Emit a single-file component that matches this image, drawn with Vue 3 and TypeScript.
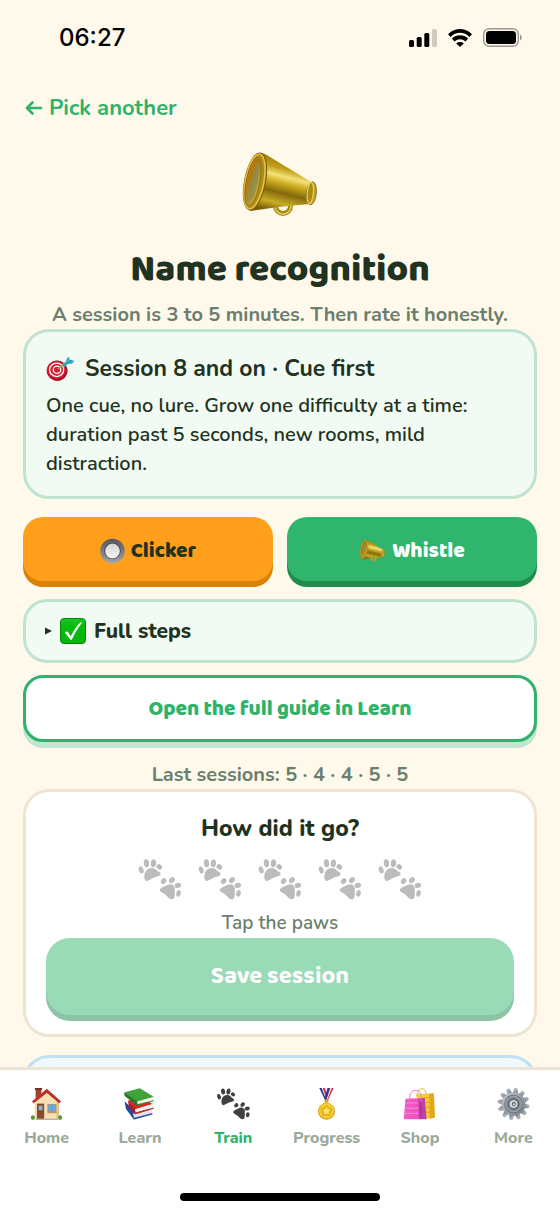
<script setup lang="ts">
import { ref } from 'vue'

interface Tab {
  label: string
  icon: string
}

const tabs: Tab[] = [
  { label: 'Home', icon: 'house' },
  { label: 'Learn', icon: 'books' },
  { label: 'Train', icon: 'paws' },
  { label: 'Progress', icon: 'medal' },
  { label: 'Shop', icon: 'bags' },
  { label: 'More', icon: 'gear' },
]

const activeTab = ref<string>('Train')
const rating = ref<number>(0)
const lastSessions: number[] = [5, 4, 4, 5, 5]
const teeth: number[] = Array.from({ length: 12 }, (_, i) => i * 30)
</script>

<template>
  <div class="app">
    <svg class="sprite" aria-hidden="true">
      <defs>
        <linearGradient id="brass" x1="0.62" y1="0.1" x2="0.38" y2="1">
          <stop offset="0" stop-color="#a07c0c" />
          <stop offset="0.2" stop-color="#c39f16" />
          <stop offset="0.34" stop-color="#f3e27a" />
          <stop offset="0.46" stop-color="#cdae22" />
          <stop offset="0.64" stop-color="#86690a" />
          <stop offset="0.84" stop-color="#c9ad27" />
          <stop offset="1" stop-color="#7a5d09" />
        </linearGradient>
        <linearGradient id="bell" x1="0" y1="0" x2="1" y2="0.6">
          <stop offset="0" stop-color="#c9861a" />
          <stop offset="0.35" stop-color="#b5780f" />
          <stop offset="0.7" stop-color="#9c9142" />
          <stop offset="1" stop-color="#c9ac34" />
        </linearGradient>
        <linearGradient id="steel" x1="0" y1="0" x2="1" y2="1">
          <stop offset="0" stop-color="#c3c8ce" />
          <stop offset="1" stop-color="#737b85" />
        </linearGradient>
        <linearGradient id="ring" x1="0" y1="0" x2="0" y2="1">
          <stop offset="0" stop-color="#55565b" />
          <stop offset="1" stop-color="#a5a6aa" />
        </linearGradient>
        <linearGradient id="knob" x1="0" y1="0" x2="0" y2="1">
          <stop offset="0" stop-color="#d2d2d4" />
          <stop offset="1" stop-color="#f7f7f8" />
        </linearGradient>
        <linearGradient id="tick" x1="0" y1="0" x2="0" y2="1">
          <stop offset="0" stop-color="#22c52c" />
          <stop offset="0.3" stop-color="#04bd0a" />
          <stop offset="1" stop-color="#06b50a" />
        </linearGradient>
        <linearGradient id="pink" x1="0" y1="0" x2="1" y2="0">
          <stop offset="0" stop-color="#f05bc4" />
          <stop offset="0.66" stop-color="#ee4fc0" />
          <stop offset="0.7" stop-color="#b83aa0" />
          <stop offset="1" stop-color="#c545ab" />
        </linearGradient>
      </defs>

      <symbol id="megaphone" viewBox="0 0 80 72">
        <circle cx="43" cy="56" r="7.500" fill="none" stroke="#a58a1c" stroke-width="5" />
        <circle cx="43" cy="56" r="8" fill="none" stroke="#e6cf5c" stroke-width="1.500" />
        <path d="M22 3 Q26 4 30 7 L72 32.500 L70 54 L38 57 L10 61 Z" fill="url(#brass)" />
        <ellipse cx="71.500" cy="43.300" rx="4.800" ry="11.500" transform="rotate(6 71.500 43.300)" fill="#c4a520" stroke="#7c610a" stroke-width="0.800" />
        <ellipse cx="70.300" cy="43" rx="3" ry="10.500" transform="rotate(6 70.300 43)" fill="#a88a16" stroke="#e5cd58" stroke-width="1.200" />
        <ellipse cx="15" cy="31.500" rx="10.500" ry="29" transform="rotate(11 15 31.500)" fill="#b08b13" stroke="#7b5e09" stroke-width="1" />
        <ellipse cx="14.500" cy="31.500" rx="9.300" ry="27.700" transform="rotate(11 14.500 31.500)" fill="none" stroke="#e0c046" stroke-width="1.600" />
        <ellipse cx="13" cy="31.800" rx="6.800" ry="24.500" transform="rotate(11 13 31.800)" fill="url(#bell)" stroke="#8f6c0c" stroke-width="0.800" />
        <path d="M9 44 C10 31 13 20 17 14 C20 25 17 42 11 51 Z" fill="#8d8c4c" opacity="0.600" />
      </symbol>

      <symbol id="target" viewBox="0 0 30 26">
        <ellipse cx="11.500" cy="14.800" rx="10.800" ry="10.600" transform="rotate(20 11.500 14.800)" fill="#a90f22" />
        <ellipse cx="10.800" cy="13.800" rx="9.700" ry="9.300" fill="#d41f33" />
        <ellipse cx="11" cy="13.800" rx="7.300" ry="7" fill="none" stroke="#fff" stroke-width="1.300" />
        <ellipse cx="11.400" cy="13.800" rx="3.900" ry="3.800" fill="none" stroke="#fff" stroke-width="1.300" />
        <path d="M12 13 L21 6" stroke="#d29a3a" stroke-width="1.600" />
        <path d="M16.500 9.500 L21 4.500 L21.500 1.500 L24 0.500 L24.500 3.500 L29.500 4.500 L27 7.500 L22.500 7.800 L18.500 11.500 Z" fill="#3db0c6" />
        <path d="M18 10 L27 3.500" stroke="#1f7f99" stroke-width="0.800" />
      </symbol>

      <symbol id="radio" viewBox="0 0 25 26">
        <circle cx="12.500" cy="13" r="12.300" fill="url(#ring)" />
        <circle cx="12.500" cy="13" r="8.200" fill="#36373b" />
        <circle cx="12.500" cy="13" r="7.400" fill="url(#knob)" />
      </symbol>

      <symbol id="check" viewBox="0 0 26 26">
        <rect x="0.500" y="0.500" width="25" height="25" rx="3.500" fill="url(#tick)" stroke="#07860c" />
        <path d="M4.800 14.500 C5.500 13.500 7 13 8 14 L10.800 18.200 C13.500 12.500 16.500 8 20.500 4.500 C21 4.100 22 4.600 21.600 5.200 C18 9.800 15 15 12 21.300 C11.500 22 10.600 22 10.200 21.300 Z" fill="#fff" />
      </symbol>

      <symbol id="paws" viewBox="0 0 130 124">
        <g fill="currentColor">
          <ellipse cx="8" cy="33" rx="7" ry="11" transform="rotate(-18 8 33)" />
          <ellipse cx="24" cy="13" rx="8" ry="12" transform="rotate(-6 24 13)" />
          <ellipse cx="45" cy="13" rx="8" ry="12" transform="rotate(10 45 13)" />
          <ellipse cx="63" cy="24" rx="7.500" ry="9" transform="rotate(-50 63 24)" />
          <path d="M40 27 C50 26 54 34 60 38 C70 42 69 51 58 53 C48 54 38 61 28 66 C20 69 16 60 18 48 C19 36 28 27 40 27 Z" />
          <ellipse cx="76" cy="67" rx="7.500" ry="9.500" transform="rotate(40 76 67)" />
          <ellipse cx="101" cy="64" rx="7.500" ry="10" transform="rotate(48 101 64)" />
          <ellipse cx="119" cy="80" rx="7.500" ry="10" transform="rotate(72 119 80)" />
          <ellipse cx="121" cy="104" rx="7" ry="10" transform="rotate(10 121 104)" />
          <path d="M66 90 C70 86 80 82 88 78 C97 73 110 79 110 90 C109 100 111 108 108 117 C104 125 94 122 89 116 C82 108 78 105 69 100 C63 97 63 93 66 90 Z" />
        </g>
      </symbol>

      <symbol id="house" viewBox="0 0 92 94">
        <rect x="14" y="2" width="17" height="30" fill="#a3402d" />
        <rect x="12" y="0" width="21" height="6" fill="#7f2c22" />
        <path d="M11 38 L47 8 L83 38 V91 H11 Z" fill="#f6dfb0" />
        <path d="M75 32 L83 38 V91 H75 Z" fill="#e6c48c" />
        <path d="M3 40 L47 2 L89 40 L84 44 L47 13 L8 44 Z" fill="#c42f2a" />
        <path d="M8 44 L47 13 L84 44" fill="none" stroke="#8c2420" stroke-width="2" />
        <rect x="19" y="47" width="19" height="43" fill="#8b4a32" stroke="#6a3424" stroke-width="2" />
        <rect x="23" y="52" width="11" height="13" fill="#7cc0dd" />
        <rect x="50" y="48" width="24" height="22" fill="#68acdf" stroke="#b58a5a" stroke-width="2" />
        <path d="M62 48 V70" stroke="#4b88b8" stroke-width="1.500" />
        <rect x="49" y="70" width="27" height="4" fill="#c1935d" />
        <rect x="14" y="90" width="66" height="4" fill="#b9b2a7" />
        <ellipse cx="6" cy="87" rx="6" ry="7" fill="#56983a" />
        <ellipse cx="86" cy="87" rx="6" ry="7" fill="#56983a" />
      </symbol>

      <symbol id="books" viewBox="0 0 90 92">
        <path d="M2 38 L6 60 L28 90 L30 66 Z" fill="#24408e" />
        <path d="M8 58 L60 60 L82 70 L30 88 Z" fill="#2b4aa0" />
        <path d="M26 74 L80 62 L82 72 L30 86 Z" fill="#e3e8f1" />
        <path d="M28 91 L82 76 L82 72 L28 86 Z" fill="#33539f" />
        <path d="M12 36 L50 30 L84 46 L32 62 Z" fill="#d8252b" />
        <path d="M12 36 L32 60 V75 L14 52 Z" fill="#b5181f" />
        <path d="M32 61 L82 46 L84 56 L34 71 Z" fill="#f3f0ea" />
        <path d="M32 76 L86 60 V56 L32 71 Z" fill="#c9242b" />
        <path d="M2 12 L46 1 L87 26 L38 40 Z" fill="#3fa23a" />
        <path d="M2 12 L38 38 V51 L6 26 C1 22 0 16 2 12 Z" fill="#267a28" />
        <path d="M38 39 L84 26 L84 36 L40 48 Z" fill="#f6f4ee" />
        <path d="M38 51 L86 38 V35 L38 47 Z" fill="#2d8930" />
      </symbol>

      <symbol id="medal" viewBox="0 0 54 98">
        <path d="M5 0 H17 L31 38 H23 Z" fill="#27348f" />
        <path d="M12 0 H16 L29 36 H26 Z" fill="#fff" />
        <path d="M16 0 H22 L31 26 L28 36 Z" fill="#d8293b" />
        <path d="M49 0 H38 L23 38 H31 Z" fill="#d8293b" />
        <path d="M43 0 H39 L26 36 H29 Z" fill="#fff" />
        <path d="M38 0 H30 L22 30 L26 38 Z" fill="#27348f" />
        <rect x="21" y="35" width="12" height="10" rx="4" fill="#d9a516" />
        <circle cx="27" cy="71" r="26" fill="#d69f10" />
        <circle cx="27" cy="70" r="23" fill="#f8d634" />
        <circle cx="27" cy="70" r="19" fill="#eec025" />
        <path d="M27 53 L32 64 L44 65 L35 73 L38 85 L27 79 L16 85 L19 73 L10 65 L22 64 Z" fill="#ffe561" stroke="#c79212" stroke-width="2" />
      </symbol>

      <symbol id="bags" viewBox="0 0 96 98">
        <path d="M42 20 C42 -4 68 -4 69 20" fill="none" stroke="#dfb433" stroke-width="3" />
        <path d="M36 18 L92 17 L95 91 L62 95 Z" fill="#f5ce36" />
        <path d="M78 17 H92 L95 91 L79 94 Z" fill="#dba91d" />
        <path d="M60 30 L93 28 M61 45 L93 43 M62 60 L94 58 M63 75 L94 73" stroke="#e9a52f" stroke-width="4" />
        <path d="M5 33 L64 31 L70 96 L0 96 Z" fill="url(#pink)" />
        <path d="M4 46 H44 M3 62 H44 M2 78 H45" stroke="#f47bcf" stroke-width="4" />
        <path d="M44 33 L47 96 L57 64 Z" fill="#a0318e" opacity="0.500" />
        <path d="M18 46 V26 C20 3 48 0 53 22 V42" fill="none" stroke="#ef76c8" stroke-width="3" />
      </symbol>

      <symbol id="gear" viewBox="-50 -50 100 100">
        <g fill="url(#steel)">
          <path v-for="a in teeth" :key="a" d="M-8 -34 L-6 -50 H4 L8 -34 Z" :transform="`rotate(${a + 10})`" />
          <circle r="37" />
        </g>
        <circle r="29" fill="#666e78" />
        <circle r="25" fill="#8f969f" stroke="#bfc5cb" stroke-width="1.500" />
        <circle r="18" fill="#747c86" stroke="#4f5660" stroke-width="2" />
        <circle r="12" fill="#d6dade" />
        <circle r="6" cx="1" fill="#4a4f57" />
        <circle r="3" cx="1" cy="1" fill="#fff" />
      </symbol>
    </svg>

    <header class="status">
      <time class="clock">06:27</time>
      <div class="indicators">
        <svg width="28" height="18" viewBox="0 0 28 18" aria-hidden="true">
          <rect x="0" y="11" width="5" height="7" rx="1.500" />
          <rect x="7.700" y="8" width="5" height="10" rx="1.500" />
          <rect x="15.300" y="4" width="5" height="14" rx="1.500" />
          <rect x="23" y="0" width="5" height="18" rx="1.500" fill="#cfcbbf" />
        </svg>
        <svg width="24" height="18" viewBox="0 0 24 18" aria-hidden="true">
          <g fill="none" stroke="#000" stroke-width="3.800">
            <path d="M1.300 6.600 C7.500 0.300 16.500 0.300 22.700 6.600" />
            <path d="M5.200 11 C9.200 7.300 14.800 7.300 18.800 11" />
          </g>
          <path d="M12 18 L8.200 14.400 C10.300 12.500 13.700 12.500 15.800 14.400 Z" />
        </svg>
        <svg width="40" height="19" viewBox="0 0 40 19" aria-hidden="true">
          <rect x="0.700" y="0.700" width="34.600" height="17.600" rx="5.500" fill="none" stroke="#9b988f" stroke-width="1.400" />
          <rect x="3" y="3" width="30" height="13" rx="3.500" />
          <path d="M37 6.500 C39.300 7.200 39.300 11.800 37 12.500 Z" fill="#9b988f" />
        </svg>
      </div>
    </header>

    <main class="content">
      <a class="back" href="#">
        <svg width="18" height="16" viewBox="0 0 18 16" aria-hidden="true">
          <path d="M16 8 H2 M7.500 2.500 L2 8 L7.500 13.500" fill="none" stroke="currentColor" stroke-width="2.600" stroke-linecap="round" stroke-linejoin="round" />
        </svg>
        Pick another
      </a>

      <svg class="hero" aria-hidden="true"><use href="#megaphone" /></svg>
      <h1>Name recognition</h1>
      <p class="hint">A session is 3 to 5 minutes. Then rate it honestly.</p>

      <section class="card mint">
        <h2><svg class="target" aria-hidden="true"><use href="#target" /></svg>Session 8 and on · Cue first</h2>
        <p>One cue, no lure. Grow one difficulty at a time: duration past 5 seconds, new rooms, mild distraction.</p>
      </section>

      <div class="sounds">
        <button type="button" class="btn orange">
          <svg class="radio" aria-hidden="true"><use href="#radio" /></svg>Clicker
        </button>
        <button type="button" class="btn green">
          <svg class="horn" aria-hidden="true"><use href="#megaphone" /></svg>Whistle
        </button>
      </div>

      <details class="steps">
        <summary>
          <svg class="marker" viewBox="0 0 7 8" aria-hidden="true"><path d="M0 0.500 L7 4 L0 7.500 Z" fill="#1f3322" /></svg>
          <svg class="check" aria-hidden="true"><use href="#check" /></svg>
          Full steps
        </summary>
      </details>

      <button type="button" class="btn outline">Open the full guide in Learn</button>

      <p class="hint history">Last sessions: {{ lastSessions.join(' · ') }}</p>

      <section class="card rate">
        <h2>How did it go?</h2>
        <div class="paws">
          <button
            v-for="n in 5"
            :key="n"
            type="button"
            class="paw"
            :class="{ on: n <= rating }"
            :aria-label="String(n)"
            @click="rating = n"
          >
            <svg aria-hidden="true"><use href="#paws" /></svg>
          </button>
        </div>
        <p class="hint small">Tap the paws</p>
        <button type="button" class="btn save" :disabled="rating === 0">Save session</button>
      </section>

      <section class="card sky"></section>
    </main>

    <footer class="dock">
      <nav class="tabs">
        <button
          v-for="tab in tabs"
          :key="tab.label"
          type="button"
          class="tab"
          :class="{ active: tab.label === activeTab }"
          @click="activeTab = tab.label"
        >
          <svg aria-hidden="true"><use :href="`#${tab.icon}`" /></svg>
          <span>{{ tab.label }}</span>
        </button>
      </nav>
      <div class="home-bar"></div>
    </footer>
  </div>
</template>

<style>
body {
  margin: 0;
  background: #fff9ec;
}
</style>

<style scoped>
.app {
  display: flex;
  flex-direction: column;
  height: 100vh;
  overflow: hidden;
  background: #fff9ec;
  color: #1f3320;
  font-family: Nunito, "Open Sans", sans-serif;
  font-size: 20px;
}
.sprite {
  position: absolute;
  width: 0;
  height: 0;
}
h1,
h2,
p {
  margin: 0;
}
button {
  padding: 0;
  border: 0;
  background: none;
  font: inherit;
  color: inherit;
  cursor: pointer;
}
.status {
  flex: none;
  display: flex;
  align-items: center;
  justify-content: space-between;
  height: 75px;
  padding: 0 37px 0 59px;
}
.clock {
  font: 500 24px/30px Inter, sans-serif;
  color: #000;
}
.indicators {
  display: flex;
  align-items: center;
  gap: 11px;
}
.content {
  flex: 1;
  min-height: 0;
  overflow: hidden;
  display: flex;
  flex-direction: column;
  padding: 19px 23px 0;
}
.content > * {
  flex: none;
}
.back {
  align-self: flex-start;
  display: flex;
  align-items: center;
  gap: 6px;
  padding-left: 2px;
  line-height: 28px;
  font-size: 22px;
  font-weight: 700;
  color: #2fb36b;
  text-decoration: none;
}
.hero {
  align-self: center;
  width: 80px;
  height: 72px;
  margin-top: 28px;
}
h1 {
  margin-top: 24px;
  line-height: 48px;
  font-family: "Baloo 2", "Open Sans", sans-serif;
  font-size: 37px;
  font-weight: 800;
  text-align: center;
}
.hint {
  margin-top: 9px;
  line-height: 28px;
  font-weight: 700;
  text-align: center;
  color: #6b7f6e;
}
h1 + .hint {
  margin-top: 7px;
}
.small {
  font-size: 19px;
  font-weight: 600;
}
.card {
  border: 3px solid;
  border-radius: 26px;
  padding: 21px 20px 19px;
}
.card h2 {
  line-height: 32px;
  font-size: 23px;
  font-weight: 700;
}
.mint {
  border-color: #c0e3cf;
  background: #f1fbf4;
  padding-bottom: 18px;
}
.mint h2 {
  display: flex;
  align-items: center;
  gap: 10px;
}
.mint p {
  margin-top: 6px;
  line-height: 29px;
  font-weight: 600;
}
.target {
  width: 29px;
  height: 26px;
}
.sounds {
  display: grid;
  grid-template-columns: 1fr 1fr;
  gap: 14px;
  margin-top: 18px;
}
.btn {
  display: flex;
  align-items: center;
  justify-content: center;
  gap: 6px;
  height: 64px;
  border-radius: 20px;
  font-family: "Baloo 2", "Open Sans", sans-serif;
  font-size: 21px;
  font-weight: 800;
}
.sounds .btn {
  padding-top: 3px;
}
.orange {
  background: #ff9f1c;
  box-shadow: 0 6px 0 #d98207;
}
.green {
  background: #2fb56c;
  box-shadow: 0 6px 0 #218c50;
  color: #fff;
}
.radio {
  width: 25px;
  height: 26px;
}
.horn {
  width: 27px;
  height: 24px;
}
.steps {
  margin-top: 18px;
  border: 3px solid #c0e3cf;
  border-radius: 24px;
  background: #f1fbf4;
}
.steps summary {
  display: flex;
  align-items: center;
  gap: 8px;
  height: 58px;
  padding: 0 19px;
  font-size: 21px;
  font-weight: 800;
  list-style: none;
  cursor: pointer;
}
.steps summary::-webkit-details-marker {
  display: none;
}
.marker {
  width: 7px;
  height: 8px;
}
.check {
  width: 26px;
  height: 26px;
}
.outline {
  height: 67px;
  margin-top: 12px;
  border: 3px solid #2fb36b;
  background: #fff;
  box-shadow: 0 6px 0 #c0e6cf;
  color: #2fb36b;
}
.history {
  margin-top: 19px;
}
.rate {
  border-color: #efe4d2;
  background: #fff;
}
.rate h2 {
  font-weight: 800;
  text-align: center;
}
.paws {
  display: flex;
  justify-content: center;
  gap: 16px;
  margin-top: 14px;
}
.paw {
  width: 44px;
  height: 41px;
  color: #bcbcbc;
}
.paw svg {
  display: block;
  width: 100%;
  height: 100%;
}
.paw.on {
  color: #3f4042;
}
.save {
  width: 100%;
  height: 77px;
  margin-top: 1px;
  border-radius: 24px;
  background: #2fb56c;
  box-shadow: 0 6px 0 #218c50;
  color: #fff;
  font-size: 24px;
  font-weight: 700;
}
.save:disabled {
  background: #98dbb6;
  box-shadow: 0 6px 0 #8cc4a5;
}
.sky {
  min-height: 80px;
  margin-top: 18px;
  border-color: #bfe1ef;
  background: #eef8fd;
}
.dock {
  flex: none;
  padding: 18px 0 11px;
  border-top: 3px solid #ece4d4;
  background: #fff;
}
.tabs {
  display: grid;
  grid-template-columns: repeat(6, 1fr);
}
.tab {
  display: flex;
  flex-direction: column;
  align-items: center;
  gap: 8px;
  font-size: 16px;
  font-weight: 800;
  line-height: 20px;
  color: #9aab9c;
}
.tab svg {
  width: 33px;
  height: 32px;
  color: #3f4042;
}
.tab.active {
  color: #2fb36b;
}
.home-bar {
  width: 200px;
  height: 8px;
  margin: 45px auto 0;
  border-radius: 4px;
  background: #000;
}
</style>
